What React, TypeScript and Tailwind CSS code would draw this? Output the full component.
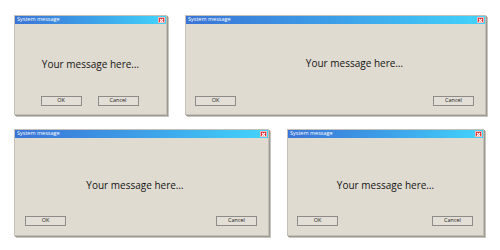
import React from 'react';

interface DialogProps {
  width: string;
  height: string;
  bodyPad: string;
  footer: string;
}

function SystemDialog({ width, height, bodyPad, footer }: DialogProps) {
  return (
    <div className={`flex flex-col bg-[#e0dbd1] border border-[#c4c0b8] shadow-[1px_1px_0_#9c9993,2px_2px_0_#c9c6c0] ${width} ${height}`}>
      <div className="flex items-center justify-between h-[8px] bg-gradient-to-r from-[#3a74d6] via-[#3d9fe8] to-[#43d4fb] pl-[2px] pr-[1px]">
        <span className="text-white text-[5.5px] leading-none">System message</span>
        <div className="flex items-center justify-center w-[7px] h-[6px] bg-[#e2232b] border-[0.5px] border-[#f7b5b5]">
          <svg width="5" height="5" viewBox="0 0 10 10">
            <path d="M2 2 L8 8 M8 2 L2 8" stroke="white" strokeWidth="2.2" />
          </svg>
        </div>
      </div>
      <div className={`flex flex-1 items-center justify-center ${bodyPad}`}>
        <p className="text-[10px] leading-none text-[#141414]">Your message here…</p>
      </div>
      <div className={`flex ${footer}`}>
        <button type="button" className="w-[41px] h-[10px] bg-[#e3dfd7] border border-[#8e8c88] text-[5.5px] leading-none text-[#222]">
          OK
        </button>
        <button type="button" className="w-[41px] h-[10px] bg-[#e3dfd7] border border-[#8e8c88] text-[5.5px] leading-none text-[#222]">
          Cancel
        </button>
      </div>
    </div>
  );
}

export default function App() {
  return (
    <div className="w-[500px] h-[250px] bg-white flex flex-col gap-[14px] pt-[15px] pl-[14px] font-['Open_Sans',sans-serif]">
      <div className="flex gap-[18px]">
        <SystemDialog width="w-[153px]" height="h-[100px]" bodyPad="pt-[8px]" footer="justify-center gap-[16px] pb-[8px] pr-[2px]" />
        <SystemDialog width="w-[301px]" height="h-[100px]" bodyPad="pt-[6px] pl-[38px]" footer="justify-between pl-[9px] pr-[11px] pb-[8px]" />
      </div>
      <div className="flex gap-[18px]">
        <SystemDialog width="w-[255px]" height="h-[107px]" bodyPad="pt-[16px] pr-[13px]" footer="justify-between pl-[10px] pr-[11px] pb-[9px]" />
        <SystemDialog width="w-[197px]" height="h-[107px]" bodyPad="pt-[16px]" footer="justify-between pl-[9px] pr-[10px] pb-[9px]" />
      </div>
    </div>
  );
}
